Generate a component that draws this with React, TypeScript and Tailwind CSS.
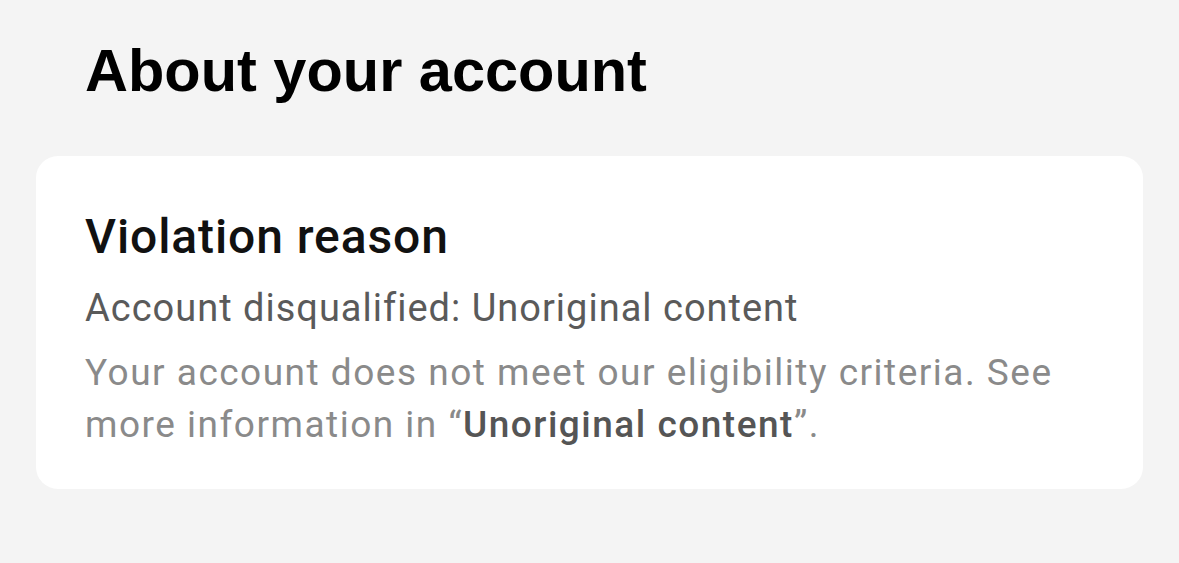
export default function App() {
  return (
    <div className="min-h-screen w-full bg-[#f4f4f4] px-[36px]">
      <div className="pt-[41px] pl-[49px]">
        <h1 className="font-['Liberation_Sans',Arial,sans-serif] text-[59.5px] leading-[60px] font-bold text-black">
          About your account
        </h1>
      </div>
      <div className="mt-[55px] rounded-[22px] bg-white px-[49px] pt-[57px] pb-[38px] font-['Roboto','Liberation_Sans',sans-serif]">
        <h2 className="text-[48px] leading-[48px] font-medium tracking-[0.9px] text-[#111111]">Violation reason</h2>
        <p className="mt-[28px] text-[38px] leading-[38px] tracking-[1px] text-[#5a5a5a]">
          Account disqualified: Unoriginal content
        </p>
        <p className="mt-[20px] text-[37px] leading-[52px] tracking-[1.5px] text-[#8a8a8a]">
          Your account does not meet our eligibility criteria. See
          <br />
          more information in “<span className="font-medium text-[#555555]">Unoriginal content</span>”.
        </p>
      </div>
    </div>
  );
}
